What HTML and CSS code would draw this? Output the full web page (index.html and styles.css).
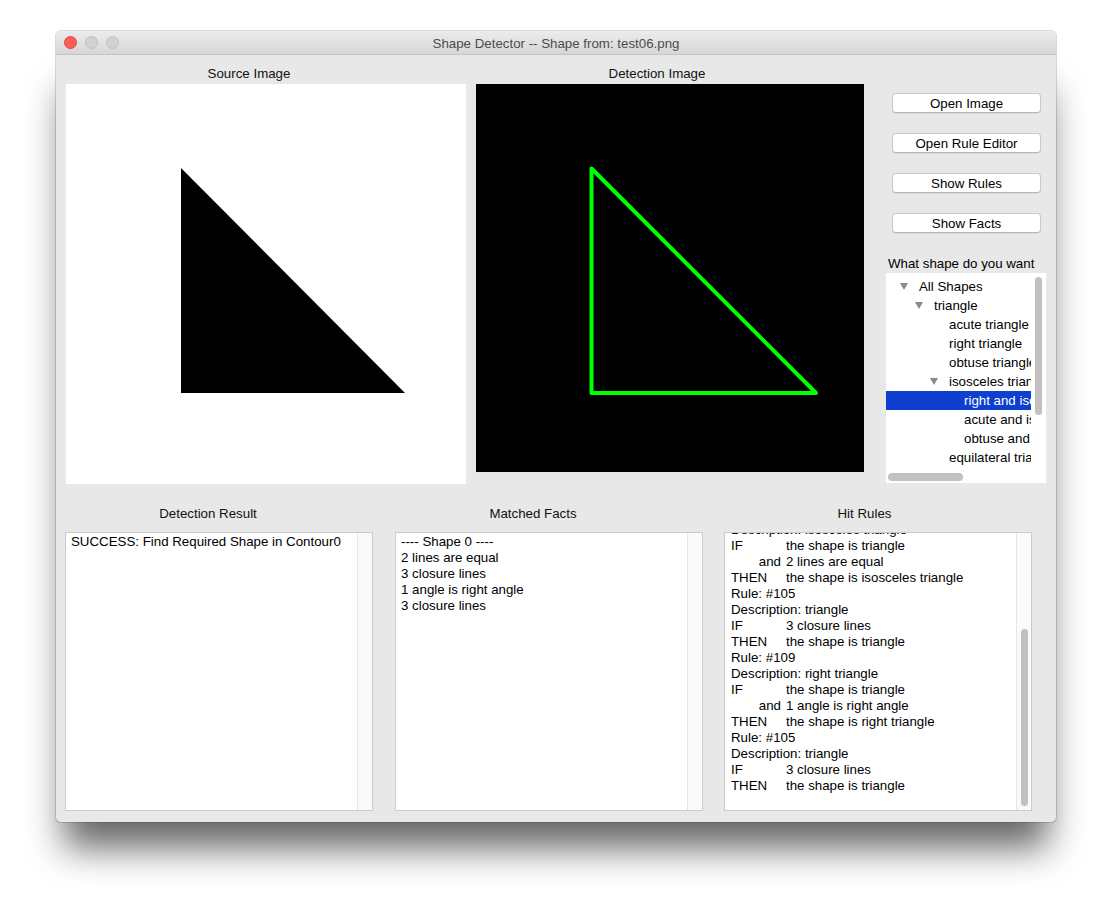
FILE: index.html
```html
<!DOCTYPE html>
<html>
<head>
<meta charset="utf-8">
<title>Shape Detector</title>
<link rel="stylesheet" href="styles.css">
</head>
<body>
<div class="page">
  <div class="frame">
  <div class="window">
    <div class="titlebar">
      <div class="lights">
        <span class="light red"></span>
        <span class="light"></span>
        <span class="light"></span>
      </div>
      <div class="title">Shape Detector -- Shape from: test06.png</div>
      <div></div>
    </div>
    <div class="content">
      <div class="top-row">
        <div class="img-col src">
          <div class="img-label src-label">Source Image</div>
          <svg class="img-box" width="400" height="400" viewBox="0 0 400 400">
            <rect width="400" height="400" fill="#ffffff"/>
            <polygon points="115,84 115,309 339,309" fill="#000000"/>
          </svg>
        </div>
        <div class="img-col det">
          <div class="img-label det-label">Detection Image</div>
          <svg class="img-box" width="388" height="388" viewBox="0 0 388 388">
            <rect width="388" height="388" fill="#000000"/>
            <polygon points="115.5,84.5 115.5,309 340,309" fill="none" stroke="#00ff00" stroke-width="4" stroke-linejoin="round"/>
          </svg>
        </div>
        <div class="side">
          <div class="buttons">
            <div class="btn">Open Image</div>
            <div class="btn">Open Rule Editor</div>
            <div class="btn">Show Rules</div>
            <div class="btn">Show Facts</div>
          </div>
          <div class="side-label">What shape do you want</div>
          <div class="tree">
            <div class="tree-main">
              <div class="tree-list">
                <div class="row l0"><span class="arrow"></span><span class="txt">All Shapes</span></div>
                <div class="row l1"><span class="arrow"></span><span class="txt">triangle</span></div>
                <div class="row l2"><span class="noarrow"></span><span class="txt">acute triangle</span></div>
                <div class="row l2"><span class="noarrow"></span><span class="txt">right triangle</span></div>
                <div class="row l2"><span class="noarrow"></span><span class="txt">obtuse triangle</span></div>
                <div class="row l2"><span class="arrow"></span><span class="txt">isosceles triangle</span></div>
                <div class="row l3 sel"><span class="noarrow"></span><span class="txt">right and isosceles triangle</span></div>
                <div class="row l3"><span class="noarrow"></span><span class="txt">acute and isosceles triangle</span></div>
                <div class="row l3"><span class="noarrow"></span><span class="txt">obtuse and isosceles triangle</span></div>
                <div class="row l2"><span class="noarrow"></span><span class="txt">equilateral triangle</span></div>
              </div>
              <div class="vscroll"><div class="vthumb"></div></div>
            </div>
            <div class="hscroll"><div class="hthumb"></div></div>
          </div>
        </div>
      </div>

      <div class="bottom-row">
        <div class="panel p1">
          <div class="panel-label">Detection Result</div>
          <div class="textbox">
            <div class="tb-text">
              <div class="line">SUCCESS: Find Required Shape in Contour0</div>
            </div>
            <div class="track"></div>
          </div>
        </div>
        <div class="panel p2">
          <div class="panel-label">Matched Facts</div>
          <div class="textbox">
            <div class="tb-text">
              <div class="line">---- Shape 0 ----</div>
              <div class="line">2 lines are equal</div>
              <div class="line">3 closure lines</div>
              <div class="line">1 angle is right angle</div>
              <div class="line">3 closure lines</div>
            </div>
            <div class="track"></div>
          </div>
        </div>
        <div class="panel p3">
          <div class="panel-label">Hit Rules</div>
          <div class="textbox">
            <div class="tb-text rules">
              <div class="line">Description: isosceles triangle</div>
              <div class="line"><span class="kw">IF</span>the shape is triangle</div>
              <div class="line"><span class="kw and">and</span>2 lines are equal</div>
              <div class="line"><span class="kw">THEN</span>the shape is isosceles triangle</div>
              <div class="line">Rule: #105</div>
              <div class="line">Description: triangle</div>
              <div class="line"><span class="kw">IF</span>3 closure lines</div>
              <div class="line"><span class="kw">THEN</span>the shape is triangle</div>
              <div class="line">Rule: #109</div>
              <div class="line">Description: right triangle</div>
              <div class="line"><span class="kw">IF</span>the shape is triangle</div>
              <div class="line"><span class="kw and">and</span>1 angle is right angle</div>
              <div class="line"><span class="kw">THEN</span>the shape is right triangle</div>
              <div class="line">Rule: #105</div>
              <div class="line">Description: triangle</div>
              <div class="line"><span class="kw">IF</span>3 closure lines</div>
              <div class="line"><span class="kw">THEN</span>the shape is triangle</div>
            </div>
            <div class="track"><div class="thumb"></div></div>
          </div>
        </div>
      </div>
    </div>
  </div>
  </div>
</div>
</body>
</html>
```

FILE: styles.css
```css
html, body {
  margin: 0;
  padding: 0;
  background: #ffffff;
}
body {
  font-family: "Liberation Sans", Arial, Helvetica, sans-serif;
  font-size: 13.3px;
  color: #000;
}
.page {
  box-sizing: border-box;
  height: 902px;
  padding: 31px 0 0 56px;
  overflow: hidden;
}
.frame {
  position: relative;
  z-index: 0;
  width: 1000px;
  height: 791px;
}
.frame::before {
  content: "";
  position: absolute;
  left: 8px;
  right: 8px;
  top: 60px;
  bottom: -26px;
  background: rgba(0,0,0,0.6);
  filter: blur(18px);
  z-index: -1;
}
.window {
  position: relative;
  width: 1000px;
  height: 791px;
  background: #e8e8e8;
  border-radius: 5px;
  box-shadow: 0 0 0 1px rgba(0,0,0,0.14);
  display: flex;
  flex-direction: column;
  overflow: hidden;
}
.titlebar {
  height: 23px;
  border-bottom: 1px solid #c4c4c4;
  background: linear-gradient(#ececec, #d6d6d6);
  display: grid;
  grid-template-columns: 1fr auto 1fr;
  align-items: center;
}
.lights {
  display: flex;
  gap: 8px;
  padding-left: 8px;
}
.light {
  width: 11px;
  height: 11px;
  border-radius: 50%;
  background: #d1d1d1;
  border: 0.5px solid #bfbfbf;
}
.light.red {
  background: #fc5f57;
  border-color: #e0443e;
}
.title {
  color: #4c4c4c;
  padding-top: 1px;
}
.content {
  padding: 10px 10px 0 10px;
  display: flex;
  flex-direction: column;
}
.top-row {
  display: flex;
  align-items: flex-start;
}
.img-col {
  display: flex;
  flex-direction: column;
}
.img-col.det {
  margin-left: 10px;
}
.img-label {
  height: 16px;
  line-height: 16px;
  padding-top: 1px;
  text-align: center;
  margin-bottom: 2px;
  color: #111;
}
.src-label { padding-right: 34px; }
.det-label { padding-right: 26px; }
.img-box {
  display: block;
}
.side {
  margin-left: 22px;
  width: 160px;
  display: flex;
  flex-direction: column;
}
.buttons {
  margin-top: 28px;
  display: flex;
  flex-direction: column;
  gap: 20px;
  padding-left: 6px;
}
.btn {
  width: 147px;
  height: 17px;
  padding-top: 1px;
  line-height: 18px;
  background: #ffffff;
  border: 1px solid #c9c9c9;
  border-bottom-color: #b5b5b5;
  border-radius: 4px;
  text-align: center;
  box-shadow: 0 1px 0 rgba(0,0,0,0.04);
}
.side-label {
  margin-top: 22px;
  padding-left: 2px;
  height: 16px;
  line-height: 16px;
  padding-top: 1px;
  margin-bottom: 1px;
  white-space: nowrap;
}
.tree {
  width: 160px;
  height: 210px;
  background: #ffffff;
  display: flex;
  flex-direction: column;
}
.tree-main {
  display: flex;
  height: 197px;
}
.tree-list {
  width: 145px;
  overflow: hidden;
  padding-top: 4px;
}
.row {
  height: 19px;
  line-height: 19px;
  display: flex;
  align-items: center;
  white-space: nowrap;
  padding-left: 13px;
}
.row.l1 { padding-left: 28px; }
.row.l2 { padding-left: 43px; }
.row.l3 { padding-left: 58px; }
.row.sel {
  background: #0f3fcf;
  color: #ffffff;
}
.arrow, .noarrow {
  width: 20px;
  flex: none;
  display: flex;
  align-items: center;
  height: 19px;
}
.arrow::before {
  content: "";
  margin-left: 1px;
  width: 0;
  height: 0;
  border-left: 4px solid transparent;
  border-right: 4px solid transparent;
  border-top: 7px solid #8a8a8a;
}
.vscroll {
  width: 15px;
  padding-top: 4px;
  display: flex;
  justify-content: center;
}
.vthumb {
  width: 7px;
  height: 138px;
  border-radius: 4px;
  background: #c1c1c1;
}
.hscroll {
  height: 13px;
  display: flex;
  align-items: center;
  padding-left: 2px;
}
.hthumb {
  width: 75px;
  height: 8px;
  border-radius: 4px;
  background: #c1c1c1;
}
.bottom-row {
  display: flex;
  margin-top: 21px;
  margin-left: -1px;
}
.panel {
  width: 308px;
  display: flex;
  flex-direction: column;
}
.panel.p2 { margin-left: 22px; }
.panel.p3 { margin-left: 21px; }
.panel-label {
  height: 16px;
  line-height: 16px;
  padding-top: 1px;
  text-align: center;
  margin-bottom: 10px;
  color: #111;
}
.p1 .panel-label { padding-right: 22px; }
.p2 .panel-label { padding-right: 32px; }
.p3 .panel-label { padding-right: 27px; }
.textbox {
  height: 277px;
  background: #ffffff;
  border: 1px solid #cbcbcb;
  display: flex;
  overflow: hidden;
}
.tb-text {
  flex: 1;
  padding: 1px 0 0 5px;
  overflow: hidden;
}
.tb-text.rules {
  padding: 0 0 0 6px;
  margin-top: -11px;
}
.line {
  height: 16px;
  line-height: 16px;
  white-space: nowrap;
}
.kw {
  display: inline-block;
  width: 55px;
}
.kw.and {
  text-align: right;
  padding-right: 5px;
  width: 50px;
}
.track {
  width: 14px;
  background: #fafafa;
  border-left: 1px solid #e6e6e6;
  display: flex;
  justify-content: center;
}
.thumb {
  width: 7px;
  height: 177px;
  margin-top: 96px;
  border-radius: 4px;
  background: #c1c1c1;
}
```
